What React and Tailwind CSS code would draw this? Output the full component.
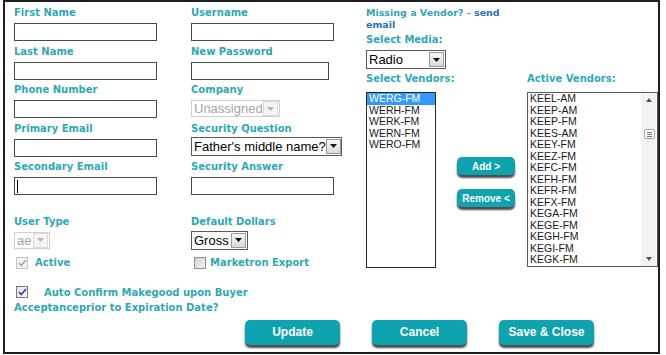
import React from 'react';

const vendors = ['WERG-FM', 'WERH-FM', 'WERK-FM', 'WERN-FM', 'WERO-FM'];
const active = [
  'KEEL-AM', 'KEEP-AM', 'KEEP-FM', 'KEES-AM', 'KEEY-FM', 'KEEZ-FM', 'KEFC-FM', 'KEFH-FM',
  'KEFR-FM', 'KEFX-FM', 'KEGA-FM', 'KEGE-FM', 'KEGH-FM', 'KEGI-FM', 'KEGK-FM',
];

const Label = ({ children, className = '' }) => (
  <div className={`h-[14px] whitespace-nowrap text-[10px] leading-[14px] font-bold text-[#2ea8b4] font-['DejaVu_Sans',sans-serif] ${className}`}>
    {children}
  </div>
);

const TextInput = ({ className = 'w-[143px]', caret = false }) => (
  <div className={`h-[18px] border border-[#4a4a4a] bg-white flex items-center ${className}`}>
    {caret && <div className="ml-[2px] h-[13px] w-[1px] bg-black" />}
  </div>
);

const Arrow = ({ disabled }) => (
  <div className={`mr-[1px] ml-auto flex h-[15px] w-[15px] shrink-0 items-center justify-center border ${disabled ? 'border-[#dadada] bg-[#f4f4f4]' : 'border-[#9a9a9a] bg-gradient-to-b from-[#f7f7f7] to-[#d9d9d9]'}`}>
    <svg width="7" height="4" viewBox="0 0 7 4">
      <path d="M0 0h7L3.5 4z" fill={disabled ? '#b5b5b5' : '#111'} />
    </svg>
  </div>
);

const Select = ({ value, className = '', disabled = false }) => (
  <div className={`flex items-center border bg-white font-['Liberation_Sans',Arial,sans-serif] text-[13px] leading-none ${disabled ? 'border-[#cfcfcf] text-[#a5a5a5]' : 'border-[#5a5a5a] text-black'} ${className}`}>
    <span className="pl-[2px] whitespace-nowrap">{value}</span>
    <Arrow disabled={disabled} />
  </div>
);

const Field = ({ label, children }) => (
  <div className="h-[38.5px]">
    <Label>{label}</Label>
    <div className="mt-[3px]">{children}</div>
  </div>
);

const Check = ({ variant }) => {
  if (variant === 'off') {
    return (
      <div className="h-[12px] w-[12px] border border-[#8e8e8e] bg-gradient-to-br from-[#d5d5d5] to-[#f5f5f5]" />
    );
  }
  const disabled = variant === 'disabled';
  return (
    <div className={`flex h-[12px] w-[12px] items-center justify-center border ${disabled ? 'border-[#c4c4c4] bg-[#f4f4f4]' : 'border-[#7a7a8e] bg-gradient-to-br from-[#e2e2ea] to-[#fafafa]'}`}>
      <svg width="9" height="8" viewBox="0 0 9 8">
        <path d="M1 4l2.3 2.5L8 1" fill="none" stroke={disabled ? '#a8a8a8' : '#3c3c9a'} strokeWidth="1.6" />
      </svg>
    </div>
  );
};

const TealButton = ({ children, className = '' }) => (
  <button className={`rounded-[5px] bg-[#0ea3ae] text-white font-bold font-['Liberation_Sans',Arial,sans-serif] shadow-[0_3px_2px_#4d4d4d] ${className}`}>
    {children}
  </button>
);

const ListBox = ({ items, selected, className = '' }) => (
  <div className={`overflow-hidden border border-[#2a2a2a] bg-white font-['Liberation_Sans',Arial,sans-serif] text-[10.5px] leading-[11px] text-[#1a1a1a] ${className}`}>
    {items.map((it) => (
      <div key={it} className={`h-[11.5px] pl-[2px] ${it === selected ? 'bg-[#3399ff] text-white' : ''}`}>{it}</div>
    ))}
  </div>
);

export default function App() {
  return (
    <div className="h-[355px] w-[666px] overflow-hidden bg-white">
      <div className="ml-[3px] h-[354px] w-[657px] border-2 border-[#1e1e1e] pl-[9px] pt-[4px]">
        <div className="flex">
          {/* Column 1 */}
          <div className="w-[177px]">
            <Field label="First Name"><TextInput /></Field>
            <Field label="Last Name"><TextInput /></Field>
            <Field label="Phone Number"><TextInput /></Field>
            <Field label="Primary Email"><TextInput /></Field>
            <Field label="Secondary Email"><TextInput caret /></Field>
            <div className="mt-[16px]">
              <Label>User Type</Label>
              <div className="mt-[3px]">
                <Select value="ae" disabled className="h-[17px] w-[36px]" />
              </div>
              <div className="mt-[7px] flex h-[14px] items-center">
                <div className="ml-[2px]"><Check variant="disabled" /></div>
                <Label className="ml-[7px]">Active</Label>
              </div>
            </div>
          </div>

          {/* Column 2 */}
          <div className="w-[175px]">
            <Field label="Username"><TextInput /></Field>
            <Field label="New Password"><TextInput className="w-[138px]" /></Field>
            <Field label="Company">
              <Select value="Unassigned" disabled className="h-[17px] w-[89px]" />
            </Field>
            <div className="h-[38.5px]">
              <Label>Security Question</Label>
              <div className="mt-[1px]">
                <Select value="Father's middle name?" className="h-[19px] w-[151px]" />
              </div>
            </div>
            <Field label="Security Answer"><TextInput /></Field>
            <div className="mt-[16px]">
              <Label>Default Dollars</Label>
              <div className="mt-[2px]">
                <Select value="Gross" className="h-[19px] w-[57px]" />
              </div>
              <div className="mt-[6px] flex h-[14px] items-center">
                <div className="ml-[3px]"><Check variant="off" /></div>
                <Label className="ml-[4px]">Marketron Export</Label>
              </div>
            </div>
          </div>

          {/* Column 3 */}
          <div className="flex-1">
            <div className="w-[145px] pt-[1px] text-[9.5px] leading-[12px] font-bold text-[#2ea8b4] font-['DejaVu_Sans',sans-serif]">
              <div>Missing a Vendor? - <span className="text-[#2a72b0]">send</span></div>
              <div className="text-[#2a72b0]">email</div>
            </div>
            <Label className="mt-[2px] text-[10.5px]">Select Media:</Label>
            <div className="mt-[3px]">
              <Select value="Radio" className="h-[19px] w-[80px]" />
            </div>
            <div className="mt-[3px] flex">
              <div className="w-[161px]">
                <Label className="text-[10.5px]">Select Vendors:</Label>
                <div className="mt-[6px] flex">
                  <ListBox items={vendors} selected="WERG-FM" className="h-[176px] w-[70px]" />
                  <div className="ml-[21px] mt-[65px] flex flex-col gap-[14px]">
                    <TealButton className="h-[18px] w-[58px] text-[10px]">Add &gt;</TealButton>
                    <TealButton className="h-[18px] w-[58px] text-[10px]">Remove &lt;</TealButton>
                  </div>
                </div>
              </div>
              <div>
                <Label className="text-[10.5px]">Active Vendors:</Label>
                <div className="mt-[6px] flex h-[175px] w-[131px] border border-[#5a5a5a] bg-white">
                  <ListBox items={active} className="h-full flex-1 border-0" />
                  <div className="flex w-[16px] flex-col items-center bg-[#f2f2f2]">
                    <svg className="mt-[5px]" width="6" height="4" viewBox="0 0 6 4">
                      <path d="M0 4h6L3 0z" fill="#555" />
                    </svg>
                    <div className="mt-[27px] flex h-[10px] w-[11px] flex-col items-center justify-center gap-[1px] rounded-[2px] border border-[#a5a5a5] bg-white">
                      <div className="h-[1px] w-[5px] bg-[#777]" />
                      <div className="h-[1px] w-[5px] bg-[#777]" />
                      <div className="h-[1px] w-[5px] bg-[#777]" />
                    </div>
                    <svg className="mt-auto mb-[5px]" width="6" height="4" viewBox="0 0 6 4">
                      <path d="M0 0h6L3 4z" fill="#555" />
                    </svg>
                  </div>
                </div>
              </div>
            </div>
          </div>
        </div>

        {/* Auto confirm */}
        <div className="mt-[15px] text-[10px] leading-[15px] font-bold text-[#2ea8b4] font-['DejaVu_Sans',sans-serif]">
          <div className="flex items-center">
            <div className="ml-[2px]"><Check variant="on" /></div>
            <span className="ml-[16px]">Auto Confirm Makegood upon Buyer</span>
          </div>
          <div>Acceptanceprior to Expiration Date?</div>
        </div>

        {/* Bottom buttons */}
        <div className="ml-[231px] mt-[5px] flex gap-[32px]">
          <TealButton className="h-[25px] w-[95px] text-[12px]">Update</TealButton>
          <TealButton className="h-[25px] w-[95px] text-[12px]">Cancel</TealButton>
          <TealButton className="h-[25px] w-[95px] text-[12px]">Save &amp; Close</TealButton>
        </div>
      </div>
    </div>
  );
}
